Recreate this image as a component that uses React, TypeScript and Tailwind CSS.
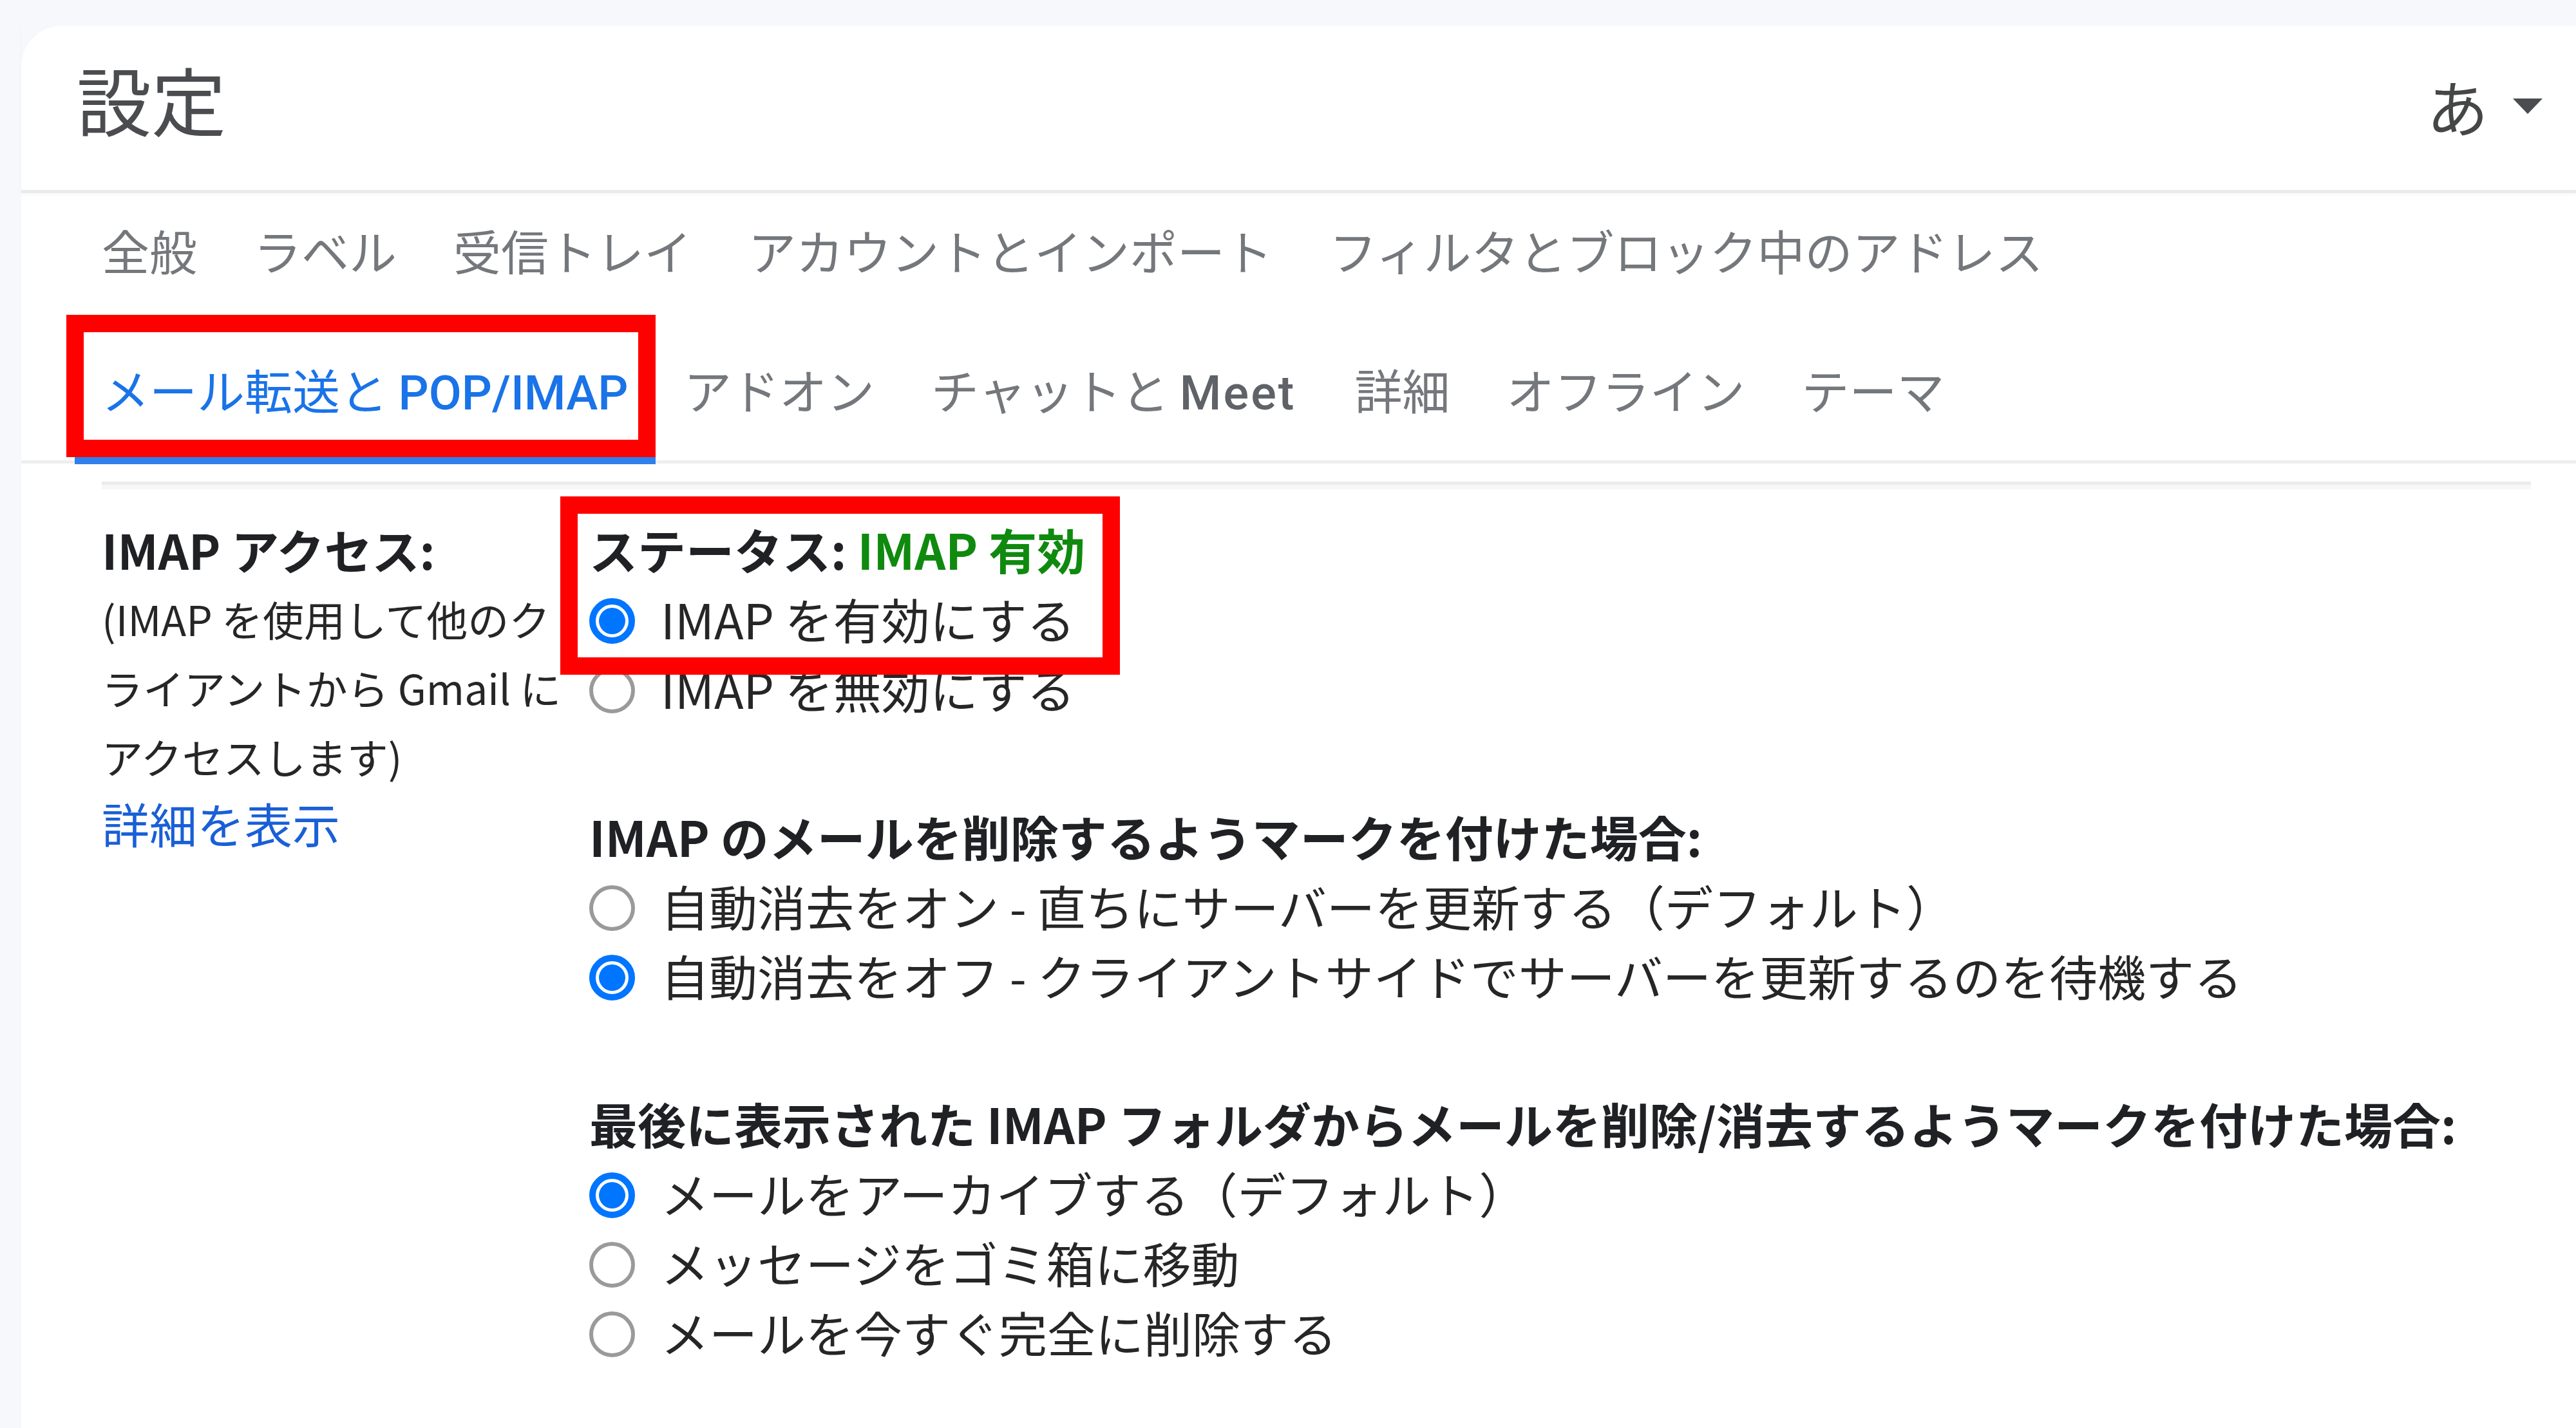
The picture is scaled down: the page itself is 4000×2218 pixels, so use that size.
import React from "react";

const row1 = ["全般", "ラベル", "受信トレイ", "アカウントとインポート", "フィルタとブロック中のアドレス"];

function Radio({ checked }: { checked?: boolean }) {
  if (checked) {
    return (
      <div className="mt-[6px] flex h-[71px] w-[71px] shrink-0 items-center justify-center rounded-full border-[10px] border-[#0075ff] bg-white">
        <div className="h-[41px] w-[41px] rounded-full bg-[#0075ff]" />
      </div>
    );
  }
  return <div className="mt-[6px] h-[71px] w-[71px] shrink-0 rounded-full border-[6px] border-[#9a9a9a] bg-white" />;
}

function Option({ checked, children }: { checked?: boolean; children: React.ReactNode }) {
  return (
    <div className="flex h-[108px] items-center gap-[40px] whitespace-nowrap text-[75px] text-[#262626]">
      <Radio checked={checked} />
      <span className="leading-[108px]">{children}</span>
    </div>
  );
}

function Tab({ children }: { children: React.ReactNode }) {
  return <div className="whitespace-nowrap px-[44px] text-[74px] leading-none text-[#74777b]">{children}</div>;
}

export default function App() {
  return (
    <div className="h-[2218px] w-[4000px] overflow-hidden bg-[#f6f8fc] pl-[33px] pt-[40px] font-['Noto_Sans_CJK_JP',sans-serif]">
      <div className="h-full w-full rounded-tl-[64px] bg-white">
        {/* header */}
        <div className="flex h-[260px] items-start justify-between border-b-[5px] border-[#ebebeb] pl-[86px] pr-[52px] shadow-[0_3px_5px_rgba(0,0,0,0.03)]">
          <div className="mt-[54px] text-[116px] leading-none text-[#4a4c4f]">設定</div>
          <div className="mt-[76px] flex items-center gap-[38px] text-[#444746]">
            <span className="text-[96px] leading-none">あ</span>
            <svg width="46" height="24" viewBox="0 0 46 24" className="mt-[2px]">
              <polygon points="0,0 46,0 23,24" fill="#4a4c4f" />
            </svg>
          </div>
        </div>

        {/* tabs */}
        <div className="border-b-[5px] border-[#eeeeee]">
          <div className="flex h-[184px] pl-[81px] pt-[51px]">
            {row1.map((t) => (
              <Tab key={t}>{t}</Tab>
            ))}
          </div>
          <div className="flex h-[231px] pl-[81px]">
            <div className="relative h-full w-[904px] shrink-0 whitespace-nowrap pl-[44px] pt-[83px] text-[74px] leading-none text-[#1a73e8]">
              メール転送と <span className="font-['Roboto',sans-serif] font-medium">POP/IMAP</span>
              <div className="absolute bottom-[5px] left-[-11px] top-[5px] w-[915px] border-[27px] border-[#ff0000]" />
              <div className="absolute bottom-[-6px] left-[2px] h-[11px] w-[902px] bg-[#2f80ed]" />
            </div>
            <div className="flex pt-[83px]">
              <Tab>アドオン</Tab>
              <div className="whitespace-nowrap pl-[44px] pr-[47px] text-[74px] leading-none text-[#74777b]">
                チャットと <span className="font-['Roboto',sans-serif] font-medium tracking-[3px] text-[#5f6368]">Meet</span>
              </div>
              <Tab>詳細</Tab>
              <Tab>オフライン</Tab>
              <Tab>テーマ</Tab>
            </div>
          </div>
        </div>

        {/* content */}
        <div className="pl-[125px] pr-[70px] pt-[28px]">
          <div className="border-t-[5px] border-[#ececec]">
            <div className="flex border-t-[7px] border-[#f7f7f7] pt-[39px]">
              <div className="w-[757px] shrink-0 whitespace-nowrap">
                <div className="text-[74px] font-bold leading-[108px] text-[#202124]">IMAP アクセス:</div>
                <div className="text-[64px] leading-[107px] text-[#262626]">
                  (IMAP を使用して他のク
                  <br />
                  ライアントから Gmail に
                  <br />
                  アクセスします)
                </div>
                <div className="text-[74px] leading-[100px] text-[#1a5fd6]">詳細を表示</div>
              </div>

              <div className="relative flex-1">
                <div className="whitespace-nowrap text-[75px] font-bold leading-[108px] text-[#202124]">
                  ステータス: <span className="text-[#0f8a0f]">IMAP 有効</span>
                </div>
                <Option checked>IMAP を有効にする</Option>
                <Option>IMAP を無効にする</Option>

                <div className="mt-[122px] whitespace-nowrap text-[75px] font-bold leading-[108px] text-[#202124]">
                  IMAP のメールを削除するようマークを付けた場合:
                </div>
                <Option>自動消去をオン - 直ちにサーバーを更新する（デフォルト）</Option>
                <Option checked>自動消去をオフ - クライアントサイドでサーバーを更新するのを待機する</Option>

                <div className="mt-[122px] whitespace-nowrap text-[75px] font-bold leading-[108px] text-[#202124]">
                  最後に表示された IMAP フォルダからメールを削除/消去するようマークを付けた場合:
                </div>
                <Option checked>メールをアーカイブする（デフォルト）</Option>
                <Option>メッセージをゴミ箱に移動</Option>
                <Option>メールを今すぐ完全に削除する</Option>

                <div className="absolute left-[-45px] top-[-28px] h-[277px] w-[869px] border-[27px] border-[#ff0000]" />
              </div>
            </div>
          </div>
        </div>
      </div>
    </div>
  );
}
